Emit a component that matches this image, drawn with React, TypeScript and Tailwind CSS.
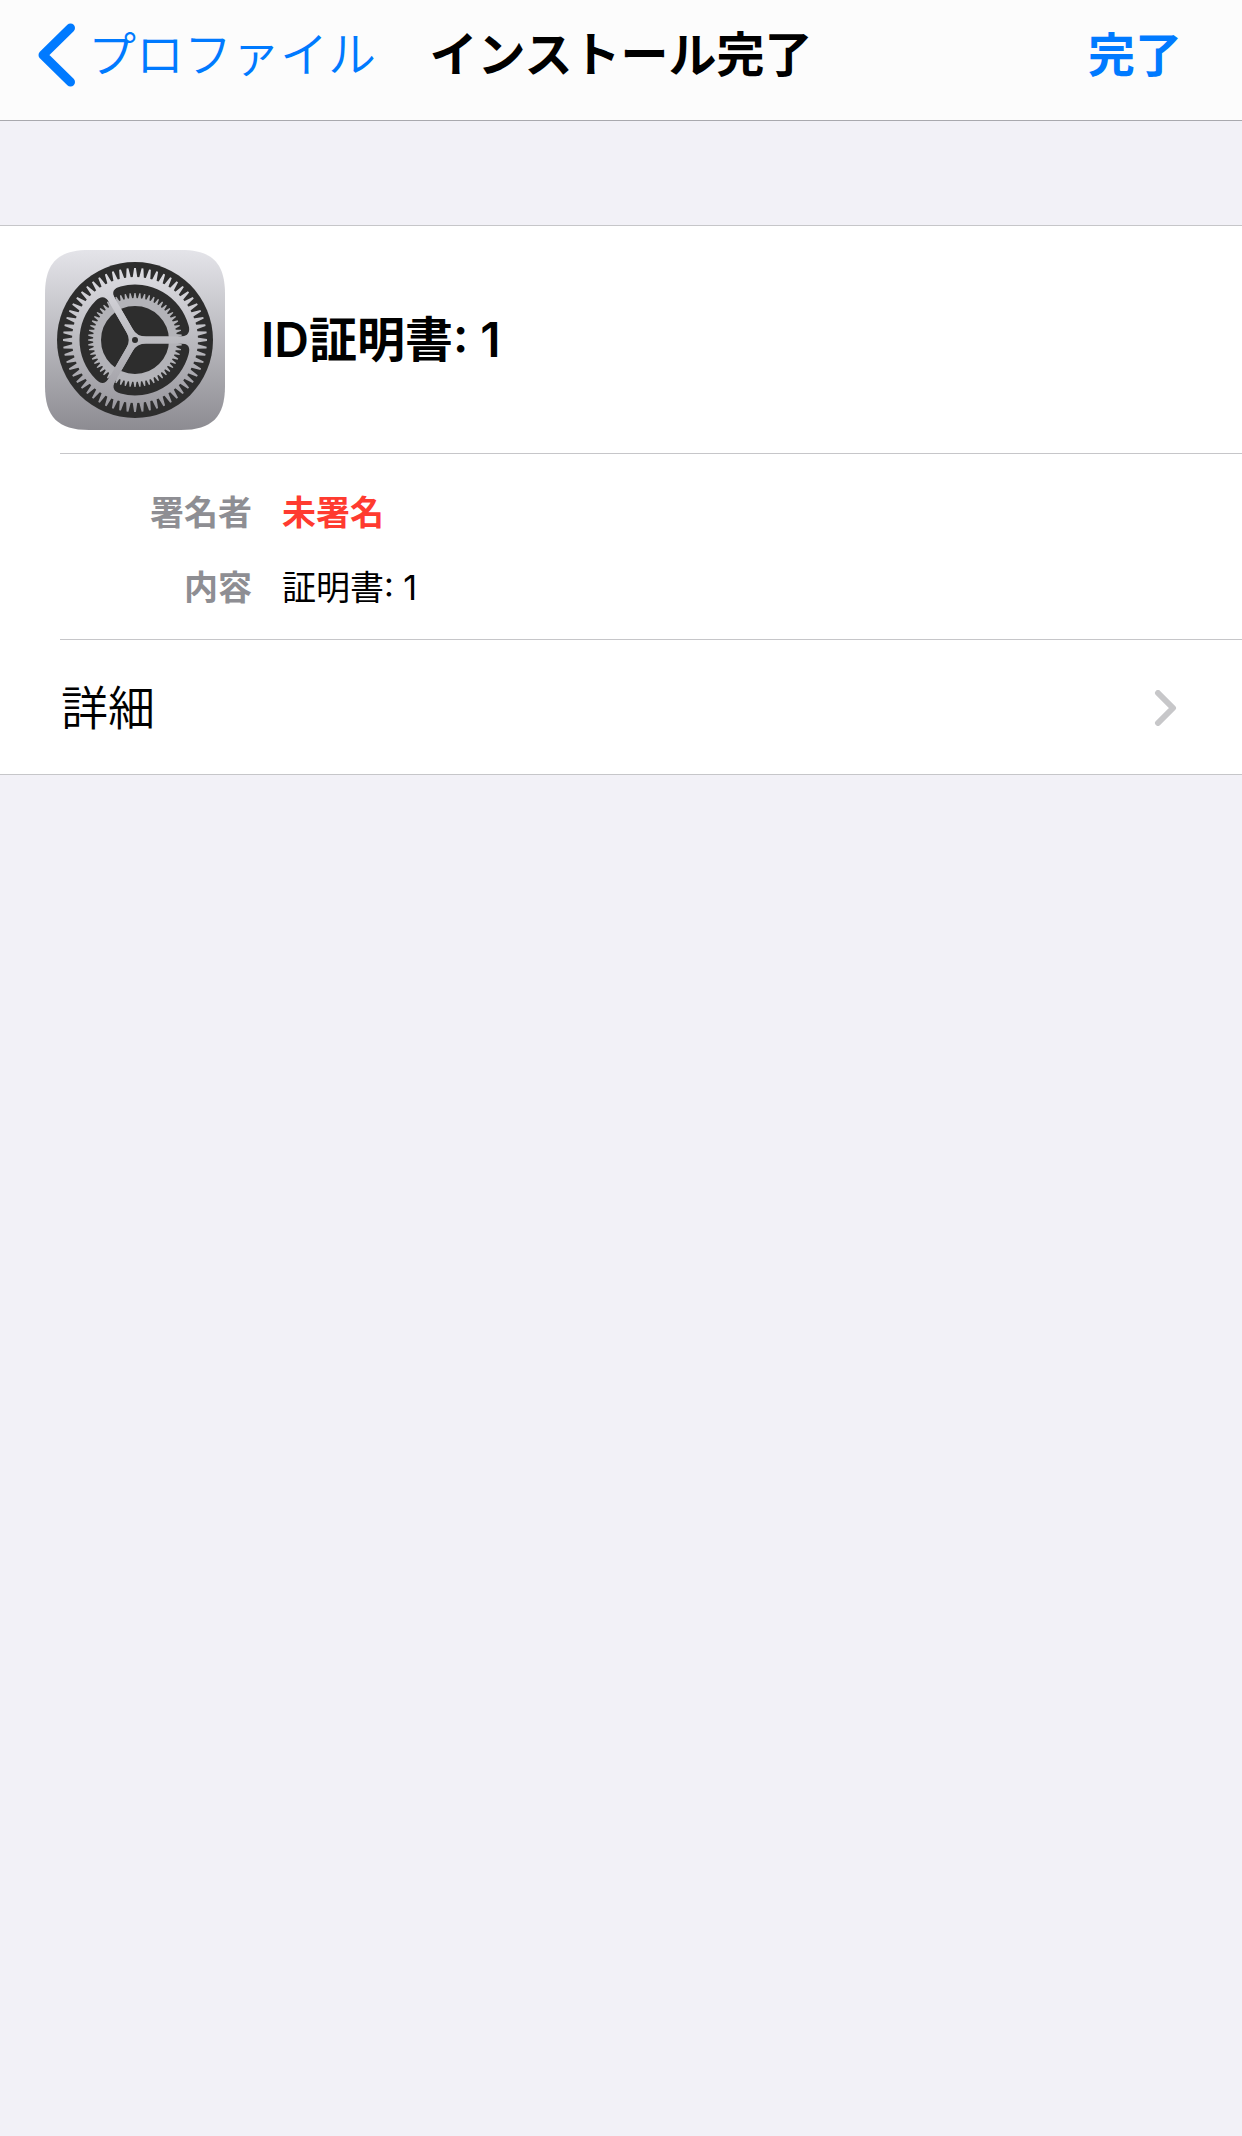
// One closed path for a ring of tapered teeth around the origin
function teethPath(count: number, inner: number, outer: number, base: number, tip: number) {
  const point = (x: number, y: number, angle: number) =>
    `${(x * Math.cos(angle) - y * Math.sin(angle)).toFixed(2)} ${(x * Math.sin(angle) + y * Math.cos(angle)).toFixed(2)}`;
  return Array.from({ length: count }, (_, i) => {
    const a = (i * 2 * Math.PI) / count;
    return `M${point(inner, -base / 2, a)}L${point(outer, -tip / 2, a)}L${point(outer, tip / 2, a)}L${point(inner, base / 2, a)}Z`;
  }).join("");
}

function SettingsIcon() {
  return (
    <svg viewBox="0 0 180 180" className="size-45 shrink-0" aria-hidden="true">
      <defs>
        <linearGradient id="plate" x1="0" y1="0" x2="0" y2="1">
          <stop offset="0" stopColor="#e4e4e9" />
          <stop offset="1" stopColor="#8d8c92" />
        </linearGradient>
        <linearGradient id="wheel" gradientUnits="userSpaceOnUse" x1="0" y1="-72" x2="0" y2="72">
          <stop offset="0" stopColor="#dedee3" />
          <stop offset="1" stopColor="#98979d" />
        </linearGradient>
      </defs>
      <path
        fill="url(#plate)"
        d="M44 0H136C167 0 180 13 180 44V136C180 167 167 180 136 180H44C13 180 0 167 0 136V44C0 13 13 0 44 0Z"
      />
      <g transform="translate(90 90)">
        <circle r="78" fill="#2d2d2d" />
        <path d={teethPath(60, 62, 72, 4.8, 1.8)} fill="url(#wheel)" />
        <circle r="63" fill="url(#wheel)" />
        {[0, 120, 240].map((angle) => (
          <path
            key={angle}
            transform={`rotate(${angle})`}
            fill="#2d2d2d"
            d="M11 -3.500H46C53 -3.500 55.500 -8 53.600 -14.400A55.500 55.500 0 0 0 -14.400 -53.600C-20.800 -52 -24 -48.500 -20 -41.600L-2.500 -11.300Q2 -3.500 11 -3.500Z"
          />
        ))}
        <path d={teethPath(60, 41, 47, 3.4, 1.2)} fill="#b3b3b8" />
        <circle r="38" fill="none" stroke="#b3b3b8" strokeWidth="8" />
        <path d="M0 0H50M0 0L-25 -43.300M0 0L-25 43.300" stroke="url(#wheel)" strokeWidth="7" />
        <circle r="3" fill="#2d2d2d" />
      </g>
    </svg>
  );
}

function Header() {
  return (
    <header className="grid h-[121px] grid-cols-[1fr_auto_1fr] items-start border-b border-[#a9a9ae] bg-[#fcfcfc] px-9">
      <button type="button" className="flex h-[110px] items-center gap-3 text-[48px] font-[350] whitespace-nowrap text-[#007aff]">
        <svg viewBox="0 0 40 64" className="h-16 w-10" fill="none" stroke="currentColor" strokeWidth="9" strokeLinecap="round" strokeLinejoin="round" aria-hidden="true">
          <path d="M34.500 5L7 32L34.500 59" />
        </svg>
        プロファイル
      </button>
      <h1 className="text-[48px] leading-[110px] font-bold text-black">インストール完了</h1>
      <button type="button" className="mr-6 justify-self-end text-[47px] leading-[110px] font-bold text-[#007aff]">
        完了
      </button>
    </header>
  );
}

export default function App() {
  return (
    <div className="min-h-screen bg-[#f2f1f7] font-[Inter,'Noto_Sans_CJK_JP',sans-serif]" lang="ja">
      <Header />
      <main className="mt-[104px] border-y border-[#c6c6c9] bg-white">
        {/* Profile */}
        <section className="flex items-center gap-9 pt-6 pb-[23px] pl-[45px]">
          <SettingsIcon />
          <h2 className="text-[48px] leading-[60px] font-semibold text-black">ID証明書: 1</h2>
        </section>

        {/* Signer and contents */}
        <dl className="ml-15 grid grid-cols-[192px_1fr] gap-x-[30px] border-y border-[#c6c6c9] pt-[21px] pb-[14px] text-[34px] leading-[75px]">
          <dt className="text-right font-bold text-[#8e8e93]">署名者</dt>
          <dd className="font-bold text-[#ff3b30]">未署名</dd>
          <dt className="text-right font-bold text-[#8e8e93]">内容</dt>
          <dd className="text-black">証明書: 1</dd>
        </dl>

        <button type="button" className="flex h-[134px] w-full items-center justify-between pt-[2px] pr-16 pl-[61px] text-[47px] font-[350] text-black">
          詳細
          <svg viewBox="0 0 24 36" className="h-9 w-6" fill="none" stroke="#c7c7c9" strokeWidth="6" strokeLinecap="round" strokeLinejoin="round" aria-hidden="true">
            <path d="M4 3L19 18L4 33" />
          </svg>
        </button>
      </main>
    </div>
  );
}
